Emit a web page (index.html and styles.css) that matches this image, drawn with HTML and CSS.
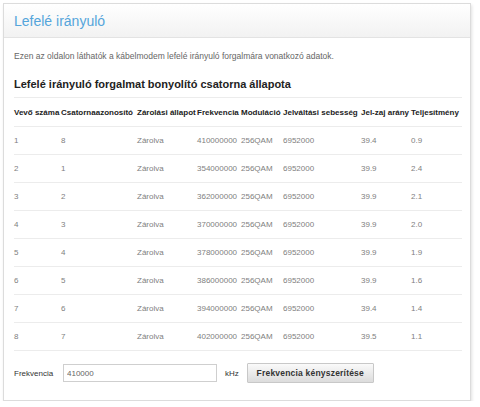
FILE: index.html
```html
<!DOCTYPE html>
<html lang="hu">
<head>
<meta charset="utf-8">
<title>Lefelé irányuló</title>
<link rel="stylesheet" href="styles.css">
</head>
<body>
<div class="panel">
  <div class="panel-header"><h1 class="title">Lefelé irányuló</h1></div>
  <div class="panel-body">
    <p class="intro">Ezen az oldalon láthatók a kábelmodem lefelé irányuló forgalmára vonatkozó adatok.</p>
    <h2 class="section-title">Lefelé irányuló forgalmat bonyolító csatorna állapota</h2>
    <table class="channels">
      <colgroup>
        <col class="c1"><col class="c2"><col class="c3"><col class="c4"><col class="c5"><col class="c6"><col class="c7"><col class="c8">
      </colgroup>
      <thead>
        <tr><th>Vevő száma</th><th>Csatornaazonosító</th><th>Zárolási állapot</th><th>Frekvencia</th><th>Moduláció</th><th>Jelváltási sebesség</th><th>Jel-zaj arány</th><th>Teljesítmény</th></tr>
      </thead>
      <tbody>
        <tr><td>1</td><td>8</td><td>Zárolva</td><td>410000000</td><td>256QAM</td><td>6952000</td><td>39.4</td><td>0.9</td></tr>
        <tr><td>2</td><td>1</td><td>Zárolva</td><td>354000000</td><td>256QAM</td><td>6952000</td><td>39.9</td><td>2.4</td></tr>
        <tr><td>3</td><td>2</td><td>Zárolva</td><td>362000000</td><td>256QAM</td><td>6952000</td><td>39.9</td><td>2.1</td></tr>
        <tr><td>4</td><td>3</td><td>Zárolva</td><td>370000000</td><td>256QAM</td><td>6952000</td><td>39.9</td><td>2.0</td></tr>
        <tr><td>5</td><td>4</td><td>Zárolva</td><td>378000000</td><td>256QAM</td><td>6952000</td><td>39.9</td><td>1.9</td></tr>
        <tr><td>6</td><td>5</td><td>Zárolva</td><td>386000000</td><td>256QAM</td><td>6952000</td><td>39.9</td><td>1.6</td></tr>
        <tr><td>7</td><td>6</td><td>Zárolva</td><td>394000000</td><td>256QAM</td><td>6952000</td><td>39.4</td><td>1.4</td></tr>
        <tr><td>8</td><td>7</td><td>Zárolva</td><td>402000000</td><td>256QAM</td><td>6952000</td><td>39.5</td><td>1.1</td></tr>
      </tbody>
    </table>
    <div class="freq-row">
      <label class="freq-label" for="freq">Frekvencia</label>
      <input class="freq-input" id="freq" type="text" value="410000">
      <span class="unit">kHz</span>
      <button class="btn" type="button">Frekvencia kényszerítése</button>
    </div>
  </div>
</div>
</body>
</html>
```

FILE: styles.css
```css
html, body {
  margin: 0;
  padding: 0;
  background: #ffffff;
}
body {
  font-family: "Liberation Sans", Arial, sans-serif;
  color: #333;
}
.panel {
  margin: 3px 0 0 3px;
  width: 466px;
  height: 396px;
  border: 1px solid #dcdcdc;
  box-shadow: 1px 2px 3px rgba(0, 0, 0, 0.12);
  background: #fff;
  box-sizing: content-box;
}
.panel-header {
  height: 33px;
  display: flex;
  align-items: center;
  padding-left: 10px;
  background: linear-gradient(#ffffff, #f2f2f2);
  border-bottom: 1px solid #e3e3e3;
}
.title {
  margin: 0;
  font-size: 14px;
  font-weight: normal;
  color: #55a5db;
}
.panel-body {
  padding: 0 8px 0 10px;
}
.intro {
  margin: 0;
  padding-top: 13px;
  font-size: 8.5px;
  line-height: 10px;
  color: #666;
}
.section-title {
  margin: 0;
  padding-top: 17px;
  font-size: 11px;
  line-height: 13px;
  font-weight: bold;
  color: #222;
}
.channels {
  margin-top: 6px;
  width: 448px;
  border-collapse: collapse;
  table-layout: fixed;
  font-size: 8px;
}
.c1 { width: 47px; }
.c2 { width: 76px; }
.c3 { width: 60px; }
.c4 { width: 44px; }
.c5 { width: 42px; }
.c6 { width: 78px; }
.c7 { width: 50px; }
.c8 { width: 51px; }
.channels th,
.channels td {
  padding: 0;
  text-align: left;
  white-space: nowrap;
  border-top: 1px solid #ececec;
}
.channels th {
  height: 28px;
  font-weight: bold;
  color: #222;
}
.channels td {
  height: 27px;
  color: #808080;
}
.channels tbody tr:last-child td {
  border-bottom: 1px solid #ececec;
}
.freq-row {
  display: flex;
  align-items: center;
  margin-top: 12px;
  font-size: 8px;
}
.freq-label {
  color: #333;
  width: 49px;
}
.freq-input {
  box-sizing: border-box;
  width: 154px;
  height: 18px;
  margin: 0;
  padding: 0 3px;
  border: 1px solid #cfcfcf;
  font-family: "Liberation Sans", Arial, sans-serif;
  font-size: 8px;
  color: #666;
}
.unit {
  margin-left: 8px;
  color: #333;
}
.btn {
  box-sizing: border-box;
  margin-left: 8px;
  width: 127px;
  height: 20px;
  padding: 0;
  border: 1px solid #c8c8c8;
  border-radius: 1px;
  background: linear-gradient(#fafafa, #dcdcdc);
  font-family: "Liberation Sans", Arial, sans-serif;
  font-size: 8.5px;
  font-weight: bold;
  letter-spacing: 0.2px;
  color: #333;
}
```
